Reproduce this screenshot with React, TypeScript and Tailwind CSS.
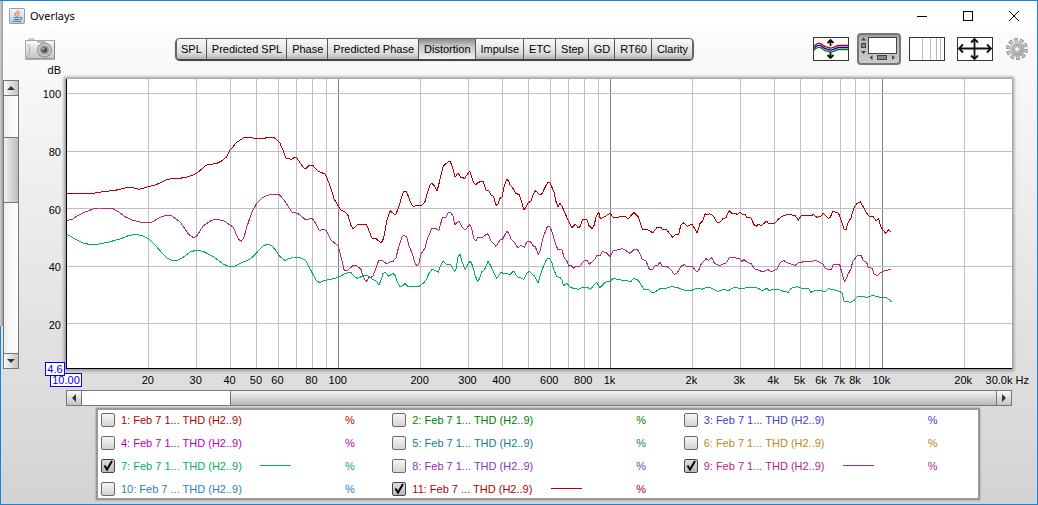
import type { ReactNode } from "react";

const views = [
  "SPL",
  "Predicted SPL",
  "Phase",
  "Predicted Phase",
  "Distortion",
  "Impulse",
  "ETC",
  "Step",
  "GD",
  "RT60",
  "Clarity",
];

const traces = [
  { id: 1, name: "1: Feb 7 1... THD (H2..9)", color: "#b40000", on: false },
  { id: 2, name: "2: Feb 7 1... THD (H2..9)", color: "#008000", on: false },
  { id: 3, name: "3: Feb 7 1... THD (H2..9)", color: "#4040c8", on: false },
  { id: 4, name: "4: Feb 7 1... THD (H2..9)", color: "#b400b4", on: false },
  { id: 5, name: "5: Feb 7 1... THD (H2..9)", color: "#148080", on: false },
  { id: 6, name: "6: Feb 7 1... THD (H2..9)", color: "#b48c14", on: false },
  { id: 7, name: "7: Feb 7 1... THD (H2..9)", color: "#00b060", on: true },
  { id: 8, name: "8: Feb 7 1... THD (H2..9)", color: "#8c32b4", on: false },
  { id: 9, name: "9: Feb 7 1... THD (H2..9)", color: "#b02880", on: true },
  { id: 10, name: "10: Feb 7 ... THD (H2..9)", color: "#2882b4", on: false },
  { id: 11, name: "11: Feb 7 ... THD (H2..9)", color: "#b40000", on: true },
];

// Curves are stored in blocks, each block has its own origin. 3 units = 1 px
const origins = [
  [60, 120],
  [230, 120],
  [400, 140],
  [560, 170],
  [720, 180],
];

const curves = [
  {
    color: "#b40000",
    blocks: [
      "20,220 100,220 130,215 165,211 180,208 200,203 218,203 236,208 250,205 265,200 285,195 300,189 318,180 330,177 360,175 385,170 400,165 410,160 420,152 437,136 450,133 468,131 485,123 500,110",
      "0,91 20,67 40,54 65,52 70,55 85,57 92,55 105,55 110,52 130,52 142,60 150,70 160,93 167,114 175,116 184,118 192,113 200,113 210,128 222,144 228,146 238,136 248,136 265,154 285,162 292,176 303,206 312,236 327,262 333,271 347,277 355,288 362,315 370,327 382,314 405,312 410,315 418,335 426,354 438,356 452,368 458,362 463,345 470,303 480,272 492,282 498,282 506,262",
      "5,170 10,155 18,154 25,168 33,190 40,200 48,196 65,196 75,185 82,160 90,134 95,130 103,138 111,152 115,140 122,108 130,78 145,65 151,65 158,83 165,112 174,98 182,112 194,115 202,103 209,94 213,106 222,130 227,134 234,127 250,124 258,150 266,150 272,164 281,170 288,196 294,193 300,175 306,172 313,138 320,118 326,124 330,134 340,146 347,160 358,164 365,186 372,210 378,202 385,187 392,185 399,166 406,152 415,160 421,165 427,160 437,138 444,127 451,130 458,148 463,158 467,182 474,200",
      "0,100 6,108 15,130 25,152 36,173 46,163 55,173 60,170 67,150 80,147 86,166 97,176 103,165 108,140 116,127 121,146 134,140 150,130 160,142 196,140 205,146 222,127 228,134 235,140 247,178 260,178 278,188 292,172 304,173 308,180 319,178 338,202 345,195 356,194 362,166 370,158 382,169 396,163 412,189 420,160 428,152 436,131 444,135 449,131 460,138 470,156",
      "0,127 10,115 18,113 27,92 34,99 54,103 60,95 66,103 75,103 80,112 92,112 102,134 109,139 115,133 124,137 140,123 145,130 165,130 175,118 182,112 190,107 206,103 226,107 235,121 244,106 275,107 280,103 290,112 303,109 310,99 325,115 330,113 338,95 352,97 358,104 364,124 372,148 378,149 383,130 393,113 403,80 412,70 421,65 428,78 436,92 446,108 460,110 468,122 476,116 482,140 492,153 497,161 505,149 513,156",
    ],
  },
  {
    color: "#b02880",
    blocks: [
      "20,301 35,299 50,289 70,278 100,267 118,264 157,265 175,275 195,290 215,300 245,307 275,307 300,292 320,286 335,288 360,305 385,342 400,353 410,348 430,317 455,301 470,298 495,304",
      "0,315 10,322 25,357 34,364 42,352 50,322 65,278 80,250 95,235 110,227 125,223 147,223 163,241 185,276 203,280 225,298 247,296 254,306 268,331 283,328 290,334 304,361 325,378 333,410 343,452 352,452 370,436 379,436 393,448 400,472 409,485 416,473 428,470 436,450 446,422 458,422 470,432 480,426 490,424 498,413 505,385",
      "6,292 12,286 20,291 26,315 36,338 45,370 52,378 57,370 62,343 75,324 82,297 95,266 108,266 116,272 127,234 138,231 144,219 151,217 159,228 164,254 171,248 177,243 186,260 194,269 201,265 208,253 215,265 221,296 228,302 234,292 248,292 258,284 264,281 272,302 288,319 300,300 308,297 316,282 321,273 328,284 334,298 344,308 354,325 362,316 373,322 380,306 390,303 400,318 406,320 415,343 421,330 428,297 436,275 442,260 449,259 456,276 464,303 473,328",
      "0,238 6,240 13,264 22,276 26,289 33,285 40,295 47,288 61,288 70,274 81,270 88,283 104,268 110,257 121,256 127,244 138,248 151,260 158,243 170,240 188,236 195,240 210,250 222,239 233,240 240,251 247,268 258,273 268,298 277,299 285,288 293,286 300,277 307,290 322,290 335,302 343,314 352,308 364,288 373,284 380,289 397,289 411,307 418,298 424,281 438,266 446,271 455,263 463,279 475,286",
      "0,258 8,252 20,248 27,233 46,233 60,237 66,244 72,239 83,248 93,250 103,266 118,271 127,276 144,269 153,276 172,266 182,246 192,242 200,248 225,256 238,247 290,242 310,252 316,266 334,269 340,253 359,253 364,272 373,304 378,298 384,283 393,266 398,245 410,228 424,227 430,242 440,247 444,262 457,265 462,282 472,287 480,279 497,271 513,269",
    ],
  },
  {
    color: "#00b060",
    blocks: [
      "20,343 30,348 45,357 70,370 95,374 118,372 150,365 180,357 205,347 228,343 247,347 267,357 285,375 300,392 320,413 335,421 350,422 370,412 390,396 408,391 430,394 460,410 490,432",
      "0,441 15,438 35,428 60,418 80,398 100,377 113,373 125,377 138,392 148,408 165,421 190,411 210,412 228,422 240,446 258,480 268,488 280,482 310,476 330,470 345,460 362,457 370,466 380,475 390,472 402,466 414,468 428,478 438,482 446,495 452,484 459,460 466,457 476,469 488,460 496,468 504,490",
      "0,441 8,437 15,430 25,440 40,439 55,441 70,430 78,420 86,402 97,388 106,392 115,397 121,378 129,364 138,373 152,373 158,385 164,394 168,388 174,350 180,343 187,368 196,389 202,376 210,362 217,375 225,405 233,425 239,415 245,396 254,388 264,364 272,377 282,400 290,416 302,398 330,403 341,393 352,410 362,413 372,418 380,400 388,394 398,405 404,408 414,430 422,402 431,377 440,357 449,355 456,370 462,390 470,410",
      "0,322 6,330 10,347 22,340 28,350 40,355 55,358 68,351 82,352 92,358 101,346 110,337 120,353 130,342 138,336 150,335 160,325 175,329 205,333 213,335 220,325 235,331 245,348 252,360 264,358 277,369 285,366 300,356 312,357 332,350 350,352 372,360 395,361 413,354 425,358 436,354 450,352 460,358 472,364",
      "0,332 10,328 25,332 40,323 65,325 98,322 115,325 128,333 140,325 148,333 155,328 180,330 190,334 205,337 213,325 232,320 245,325 266,325 272,337 290,330 305,333 315,336 325,326 350,331 366,338 372,364 392,367 402,362 410,351 430,350 442,352 458,346 480,352 500,354 510,360 514,365",
    ],
  },
];

const toPoints = (blocks: string[]) =>
  blocks
    .flatMap((block, i) =>
      block.split(" ").map((pair) => {
        const [x, y] = pair.split(",").map(Number);
        return `${(origins[i][0] + x / 3).toFixed(1)},${(origins[i][1] + y / 3).toFixed(1)}`;
      })
    )
    .join(" ");

const freqX = (f: number) => `${(Math.log10(f / 10) / Math.log10(3000)) * 100}%`;
const dbY = (db: number) => `${((105 - db) / (105 - 4.7)) * 100}%`;

const gridFreqs = [10, 100, 1000, 10000]
  .flatMap((decade) => [1, 2, 3, 4, 5, 6, 7, 8, 9].map((n) => n * decade))
  .filter((f) => f > 10 && f < 30000);

const freqLabels = [
  20, 30, 40, 50, 60, 80, 100, 200, 300, 400, 600, 800, 1000, 2000, 3000, 4000, 5000, 6000, 7000,
  8000, 10000, 20000,
];

const dbLabels = [100, 80, 60, 40, 20];

const JavaIcon = () => (
  <svg width="16" height="16" viewBox="0 0 16 16" aria-hidden="true">
    <defs>
      <linearGradient id="java" x1="0" y1="0" x2="0" y2="1">
        <stop offset="0" stopColor="#f4f6f8" />
        <stop offset="1" stopColor="#bccad6" />
      </linearGradient>
    </defs>
    <rect x="0.5" y="0.5" width="15" height="15" rx="1" fill="url(#java)" stroke="#8c9fae" />
    <path d="M9.5 2C9.5 4 5.5 4.5 6 6.5C6.2 7.5 7.5 7.8 7.5 9M11 4.5C8.5 5.500 8 6.2 9 7.2C9.5 7.8 9 8.5 8.5 9" fill="none" stroke="#e8803a" strokeWidth="1.1" />
    <path d="M4.5 9.8H10.5M5.5 11.5H10M3.5 13.3H12M11 9.5C13.5 9 13 11.3 11 11.7" fill="none" stroke="#4a7ca5" strokeWidth="1.1" />
  </svg>
);

const CameraIcon = () => (
  <svg width="30" height="22" viewBox="0 0 30 22" aria-hidden="true">
    <defs>
      <linearGradient id="camera" x1="0" y1="0" x2="0" y2="1">
        <stop offset="0" stopColor="#f6f6f6" />
        <stop offset="1" stopColor="#c4c4c4" />
      </linearGradient>
      <radialGradient id="lens">
        <stop offset="0" stopColor="#222" />
        <stop offset="0.3" stopColor="#666" />
        <stop offset="0.5" stopColor="#999" />
        <stop offset="0.75" stopColor="#d0d0d0" />
        <stop offset="1" stopColor="#7c7c7c" />
      </radialGradient>
    </defs>
    <path d="M4 3V1H9V3" fill="#ddd" stroke="#aaa" />
    <rect x="0.5" y="2.5" width="29" height="18.5" fill="url(#camera)" stroke="#a8a8a8" />
    <path d="M1 5H29" stroke="#fff" />
    <path d="M1 21H29.5V3" fill="none" stroke="#858585" />
    <path d="M3 6C5.5 10 5.5 16 2 19" fill="none" stroke="#aaa" />
    <rect x="12" y="3" width="8" height="2" fill="#bbb" />
    <circle cx="19.5" cy="12" r="7.5" fill="url(#lens)" />
    <circle cx="18.5" cy="11" r="1" fill="#ccd" />
  </svg>
);

const TracesIcon = () => (
  <svg width="36" height="24" viewBox="0 0 36 24" aria-hidden="true">
    <rect x="0.5" y="0.5" width="35" height="23" fill="#fff" stroke="#333" />
    <path d="M17.5 3V9M17.5 15V21M14.5 6L17.5 3L20.5 6M14.5 18L17.5 21L20.5 18" fill="none" stroke="#111" strokeWidth="1.8" />
    <g fill="none" strokeWidth="1.3">
      <path d="M1 9.5C3 6 7 5.5 9 7.5S13 10.5 17 11S23 8.5 26 8.5H35" stroke="#c00000" />
      <path d="M1 11.5C3 8 7 7.5 9 9.5S13 12.5 17 13S23 10.5 26 10.5H35" stroke="#0000d0" />
      <path d="M1 13.5C3 10 7 9.5 9 11.5S13 14.5 17 15S23 12.5 26 12.5H35" stroke="#008000" />
    </g>
  </svg>
);

const ScrollbarsIcon = () => (
  <svg width="44" height="32" viewBox="0 0 44 32" aria-hidden="true">
    <defs>
      <linearGradient id="pressed" x1="0" y1="0" x2="0" y2="1">
        <stop offset="0" stopColor="#9a9a9a" />
        <stop offset="0.2" stopColor="#b8b8b8" />
        <stop offset="1" stopColor="#cccccc" />
      </linearGradient>
    </defs>
    <rect x="1" y="1" width="42" height="30" rx="3" fill="url(#pressed)" stroke="#777" strokeWidth="2" />
    <rect x="11.5" y="4.5" width="28" height="16" fill="#fff" stroke="#444" />
    <path d="M4 7.5L6.5 4.5L9 7.5ZM4 18L6.5 21L9 18ZM15.5 22L12.5 24.5L15.5 27ZM35 22L38 24.5L35 27Z" fill="#444" />
    <rect x="4.5" y="10.5" width="4" height="4" fill="#888" stroke="#444" />
    <rect x="20.5" y="22.5" width="9" height="4" fill="#888" stroke="#444" />
  </svg>
);

const FreqAxisIcon = () => (
  <svg width="36" height="24" viewBox="0 0 36 24" aria-hidden="true">
    <rect x="0.5" y="0.5" width="35" height="23" fill="#fff" stroke="#333" />
    <path d="M13.5 1V23M21.5 1V23M27.5 1V23M31.5 1V23" stroke="#bbb" />
  </svg>
);

const LimitsIcon = () => (
  <svg width="36" height="24" viewBox="0 0 36 24" aria-hidden="true">
    <rect x="0.5" y="0.5" width="35" height="23" fill="#fff" stroke="#333" />
    <path
      d="M2 11.5H34M17.5 2V22M6 7.5L2 11.5L6 15.5M30 7.5L34 11.5L30 15.5M14 5.5L17.5 2L21 5.5M14 18.5L17.5 22L21 18.5"
      fill="none"
      stroke="#111"
      strokeWidth="1.8"
    />
  </svg>
);

const GearIcon = () => (
  <svg width="22" height="22" viewBox="0 0 22 22" aria-hidden="true">
    <defs>
      <linearGradient id="gear" x1="0" y1="0" x2="1" y2="1">
        <stop offset="0" stopColor="#dcdcdc" />
        <stop offset="1" stopColor="#9c9c9c" />
      </linearGradient>
    </defs>
    <circle cx="11" cy="11" r="9" fill="none" stroke="#8a8a8a" strokeWidth="4" pathLength="100" strokeDasharray="6.4 3.6" />
    <circle cx="11" cy="11" r="8.8" fill="none" stroke="#c4c4c4" strokeWidth="3" pathLength="100" strokeDasharray="4 6" strokeDashoffset="-1.2" />
    <circle cx="11" cy="11" r="7.5" fill="url(#gear)" />
    <circle cx="11" cy="11" r="4.5" fill="#c8c8c8" stroke="#989898" />
    <circle cx="11" cy="11" r="2.5" fill="#f8f8f8" stroke="#a4a4a4" />
  </svg>
);

const TitleBar = () => (
  <header className="flex h-[30px] shrink-0 items-center bg-white pl-2">
    <JavaIcon />
    <h1 className="ml-[5px] font-['Noto_Sans',sans-serif] text-[11px] leading-4">Overlays</h1>
    <div className="ml-auto flex h-full">
      <button type="button" aria-label="Minimize" className="flex w-[46px] items-center justify-center">
        <svg width="10" height="10" shapeRendering="crispEdges">
          <path d="M0 5.5H10" stroke="#000" />
        </svg>
      </button>
      <button type="button" aria-label="Maximize" className="flex w-[46px] items-center justify-center">
        <svg width="10" height="10" shapeRendering="crispEdges">
          <rect x="0.5" y="0.5" width="9" height="9" fill="none" stroke="#000" />
        </svg>
      </button>
      <button type="button" aria-label="Close" className="flex w-[46px] items-center justify-center">
        <svg width="10" height="10">
          <path d="M0 0L10 10M10 0L0 10" stroke="#000" />
        </svg>
      </button>
    </div>
  </header>
);

const Toolbar = () => (
  <div className="flex h-9 shrink-0 items-center pr-[9px] pl-6">
    <button type="button" aria-label="Capture image">
      <CameraIcon />
    </button>
    <div className="ml-[120px] flex h-[23px] overflow-hidden rounded-[5px] border-2 border-t-1 border-[#666] border-b-[#444] shadow-[0_0_1px_#888]">
      {views.map((view) => (
        <button
          key={view}
          type="button"
          aria-pressed={view === "Distortion"}
          className={
            view === "Distortion"
              ? "border-l border-[#555] bg-linear-to-b from-[#8a8a8a] via-[#c0c0c0] via-30% to-[#f2f2f2] pt-0.5 pr-1 pl-[5px] text-[11px] whitespace-nowrap"
              : "border-l border-[#555] bg-linear-to-b from-[#fafafa] via-[#dedede] via-70% to-[#b4b4b4] pt-0.5 pr-1 pl-[5px] text-[11px] whitespace-nowrap first:border-l-0 first:pl-1"
          }
        >
          {view}
        </button>
      ))}
    </div>
    <div className="ml-auto flex items-center gap-2">
      <button type="button" aria-label="Separate traces">
        <TracesIcon />
      </button>
      <button type="button" aria-label="Scrollbars" aria-pressed="true">
        <ScrollbarsIcon />
      </button>
      <button type="button" aria-label="Frequency axis">
        <FreqAxisIcon />
      </button>
      <button type="button" aria-label="Limits" className="ml-1">
        <LimitsIcon />
      </button>
      <button type="button" aria-label="Graph controls" className="ml-[5px]">
        <GearIcon />
      </button>
    </div>
  </div>
);

const ArrowButton = ({ label, d, className }: { label: string; d: string; className: string }) => (
  <button
    type="button"
    aria-label={label}
    className={`flex shrink-0 items-center justify-center from-[#fafafa] to-[#c4c4c4] border-[#777] ${className}`}
  >
    <svg width="8" height="8" viewBox="0 0 8 8">
      <path d={d} fill="#333" />
    </svg>
  </button>
);

const VerticalScrollbar = () => (
  <div className="mt-px ml-0.5 flex w-4 flex-col border border-[#777] bg-white">
    <ArrowButton label="Scroll up" d="M0 6L4 2L8 6Z" className="h-[15px] border-b bg-linear-to-r" />
    <div className="flex-[41] bg-linear-to-r from-[#eee] to-white" />
    <div className="flex-[65] border-y border-[#777] bg-linear-to-r from-[#f0f0f0] to-[#bdbdbd]" />
    <div className="flex-[151] bg-linear-to-r from-[#eee] to-white" />
    <ArrowButton label="Scroll down" d="M0 2L4 6L8 2Z" className="h-[15px] border-t bg-linear-to-r" />
  </div>
);

const HorizontalScrollbar = () => (
  <div className="flex h-4 shrink-0 border border-[#777] bg-white">
    <ArrowButton label="Scroll left" d="M6 0L2 4L6 8Z" className="w-[15px] border-r bg-linear-to-b" />
    <div className="flex-[148]" />
    <div className="flex-[766] border-l border-[#777] bg-linear-to-b from-[#f4f4f4] to-[#b8b8b8]" />
    <ArrowButton label="Scroll right" d="M2 0L6 4L2 8Z" className="w-[15px] border-l bg-linear-to-b" />
  </div>
);

const AxisLimit = ({ children, className }: { children: ReactNode; className: string }) => (
  <output className={`absolute h-[14px] border border-[#00f] bg-white text-center text-[11px] leading-3 text-[#00f] ${className}`}>
    {children}
  </output>
);

const Plot = () => (
  <div className="relative ml-[47px] flex-1 border-b border-l border-black bg-white shadow-[0_0_3px_2px_#999]">
    <svg className="block h-full w-full overflow-visible text-[11px]" role="img" aria-label="Distortion against frequency">
      <g shapeRendering="crispEdges">
        {gridFreqs.map((f) => (
          <line
            key={f}
            x1={freqX(f)}
            x2={freqX(f)}
            y1="0"
            y2="100%"
            stroke={[100, 1000, 10000].includes(f) ? "#808080" : "#c0c0c0"}
          />
        ))}
        {dbLabels.map((db) => (
          <line key={db} x1="0" x2="100%" y1={dbY(db)} y2={dbY(db)} stroke="#c0c0c0" />
        ))}
      </g>
      <svg width="100%" height="100%" viewBox="67 79 945 289" preserveAspectRatio="none">
        {curves.map((curve) => (
          <polyline
            key={curve.color}
            points={toPoints(curve.blocks)}
            fill="none"
            stroke={curve.color}
            strokeLinejoin="round"
            vectorEffect="non-scaling-stroke"
            shapeRendering="crispEdges"
          />
        ))}
      </svg>
      <text x="-6" y="-5" textAnchor="end">
        dB
      </text>
      {dbLabels.map((db) => (
        <text key={db} x="-6" y={dbY(db)} dy="5" textAnchor="end">
          {db}
        </text>
      ))}
      {freqLabels.map((f) => (
        <text key={f} x={freqX(f)} y="100%" dx="-1" dy="16" textAnchor="middle">
          {f < 1000 ? f : `${f / 1000}k`}
        </text>
      ))}
      <text x="100%" y="100%" dx="17" dy="16" textAnchor="end">
        30.0k Hz
      </text>
    </svg>
    <AxisLimit className="-bottom-[19px] -left-[17px] w-8">10.00</AxisLimit>
    <AxisLimit className="-bottom-[8px] -left-[22px] w-5">4.6</AxisLimit>
  </div>
);

const Legend = () => (
  <div className="mt-0.5 mr-8 ml-[30px] grid grid-cols-3 gap-y-2 border-2 border-[#999] bg-white px-[3px] py-0.5 shadow-[0_0_2px_#888]">
    {traces.map((trace) => (
      <label key={trace.id} className="flex h-[15px] items-center text-[11px]" style={{ color: trace.color }}>
        <span className="relative flex">
          <input
            type="checkbox"
            defaultChecked={trace.on}
            className="peer size-[14px] appearance-none rounded-[2px] border border-[#6a6a6a] bg-linear-to-b from-[#f6f6f6] to-[#d4d4d4] checked:border-[#444] checked:from-[#ddd] checked:to-[#bbb]"
          />
          <svg className="absolute inset-0 hidden peer-checked:block" width="14" height="14" viewBox="0 0 14 14">
            <path d="M3.5 6.5L6 10.5L11 2" fill="none" stroke="#000" strokeWidth="2" />
          </svg>
        </span>
        <span className="ml-1.5 w-[139px] pt-0.5 whitespace-nowrap">{trace.name}</span>
        <span className="h-px w-[31px]" style={{ backgroundColor: trace.on ? trace.color : "transparent" }} />
        <span className="ml-[54px] pt-0.5">%</span>
      </label>
    ))}
  </div>
);

const App = () => {
  return (
    <div className="relative flex h-screen min-h-[400px] flex-col border border-[#1883d7] bg-white font-['Liberation_Sans',Arial,sans-serif] text-black">
      <div className="absolute top-0 -left-px h-[325px] w-[3px] bg-linear-to-r from-[#d0d0d0] to-[#999]" />
      <TitleBar />
      <main className="flex min-h-0 flex-1 flex-col bg-linear-to-b from-[#fcfcfc] to-[#d3d3d3] pb-1">
        <Toolbar />
        <div className="flex min-h-0 flex-1 pt-3 pr-[25px]">
          <VerticalScrollbar />
          <Plot />
        </div>
        <div className="flex shrink-0 flex-col pt-[21px] pr-[25px] pl-[65px]">
          <HorizontalScrollbar />
          <Legend />
        </div>
      </main>
    </div>
  );
};

export default App;
